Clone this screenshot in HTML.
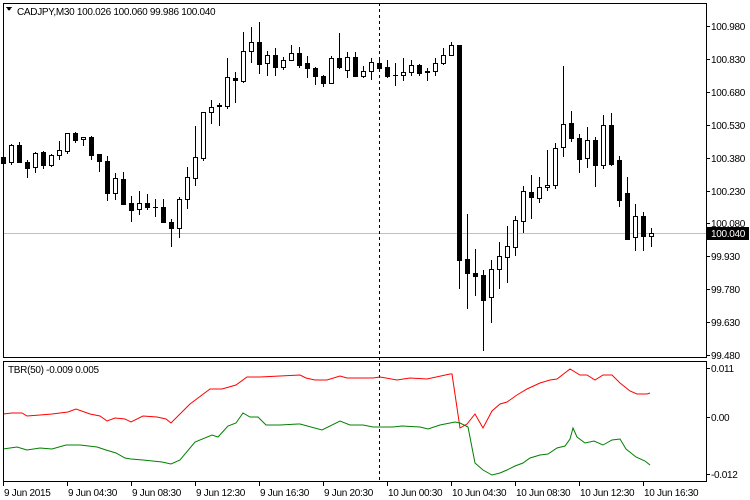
<!DOCTYPE html>
<html><head><meta charset="utf-8"><style>
html,body{margin:0;padding:0;background:#fff;width:750px;height:500px;overflow:hidden}
svg text{font-family:"Liberation Sans",sans-serif;font-size:10px;fill:#000;letter-spacing:-0.3px}
</style></head><body>
<svg id="s" width="750" height="500" xmlns="http://www.w3.org/2000/svg" shape-rendering="crispEdges">
<rect width="750" height="500" fill="#fff"/>
<line x1="3" y1="233.5" x2="707" y2="233.5" stroke="#c0c0c0"/>
<line x1="379.5" y1="3" x2="379.5" y2="482" stroke="#000" stroke-dasharray="3,3"/>
<g id="c"></g>
<polyline fill="none" stroke="#f00" stroke-width="1" shape-rendering="auto" points="3,414 12,413 22,413 27,416 40,415 52,414 68,412 76,409 90,414 100,416 107,421 115,418 125,419 131,422 143,416 157,417 166,419 171,423 190,404 210,389 222,389 236,385 247,377 260,377 280,376 300,375 306,378 315,380 327,380 340,376 347,378 373,378 380,377 397,380 410,378 427,379 450,374 452,374 460,428 467,424 475,414 483,428 492,411 500,404 507,402 517,395 527,389 540,383 550,380 557,379 570,369 580,375 587,375 595,380 603,375 612,375 620,383 630,391 637,394 647,394 650,393"/>
<polyline fill="none" stroke="#008000" stroke-width="1" shape-rendering="auto" points="3,449 17,447 27,450 40,448 52,449 66,445 80,445 97,447 106,450 116,453 125,458 131,459 143,460 162,462 171,464 180,460 195,442 212,435 218,437 228,426 236,423 243,413 250,417 258,417 266,425 280,425 298,424 300,424 322,430 340,421 350,425 363,425 373,427 380,427 393,427 402,426 420,427 428,429 440,425 455,422 460,423 468,427 475,463 483,470 492,475 500,473 507,470 515,466 523,463 530,458 540,455 548,454 557,448 565,446 570,439 573,428 577,437 585,443 594,441 603,445 612,440 620,439 626,449 636,457 645,461 650,465"/>
<rect x="3.5" y="3.5" width="703" height="354" fill="none" stroke="#000"/>
<rect x="3.5" y="361.5" width="703" height="120" fill="none" stroke="#000"/>
<polygon points="6,7 12,7 9,11" fill="#000"/>
<text x="17" y="15">CADJPY,M30  100.026 100.060 99.986 100.040</text>
<text x="8" y="373">TBR(50) -0.009 0.005</text>
<g id="ax"></g>
<rect x="707" y="227" width="42" height="13" fill="#000"/>
<text x="711" y="237" style="fill:#fff">100.040</text>
</svg>
<script>
var d=[[157,163,155,165,0],[145,162,144,164,1],[145,162,142,162,0],[162,168,160,177,0],[153,167,152,172,1],[152,165,151,168,0],[155,165,154,166,1],[150,155,141,159,1],[133,151,133,153,1],[133,140,132,142,0],[137,139,137,145,1],[137,155,136,159,0],[154,161,154,171,0],[161,193,156,200,0],[178,193,173,199,1],[179,204,172,204,0],[203,210,196,221,0],[203,209,191,214,1],[203,207,194,209,0],[207,207,199,216,0],[207,222,199,222,0],[222,228,219,246,0],[199,228,197,237,1],[177,199,167,208,1],[157,178,126,185,1],[112,158,112,160,1],[107,112,100,123,1],[105,106,103,125,0],[77,106,58,108,1],[78,80,72,102,0],[51,81,32,82,1],[42,51,27,62,1],[42,64,22,73,0],[55,63,51,75,1],[55,67,48,75,0],[60,67,57,69,1],[53,60,45,60,1],[53,65,47,67,0],[63,68,56,77,0],[68,76,67,84,0],[76,83,75,86,0],[58,83,56,83,1],[58,67,33,68,0],[57,70,52,77,1],[57,76,52,76,0],[71,76,66,77,1],[62,71,58,79,1],[63,68,60,70,0],[67,76,60,77,0],[75,75,63,85,0],[72,75,58,80,1],[65,72,60,75,1],[65,73,64,75,0],[71,72,68,80,0],[63,71,58,75,1],[55,63,48,64,1],[45,55,42,55,1],[45,260,45,288,0],[259,273,214,308,0],[273,276,249,295,0],[275,300,270,350,0],[269,297,260,322,1],[256,269,242,288,1],[246,257,226,282,1],[220,247,216,255,1],[191,221,186,232,1],[192,197,175,218,0],[187,198,177,202,1],[185,187,150,190,1],[148,185,143,188,1],[124,147,66,156,1],[123,138,111,141,0],[138,159,134,172,0],[140,158,127,167,1],[140,165,137,186,0],[125,165,115,168,1],[125,164,113,165,0],[160,200,156,206,0],[193,239,177,239,0],[216,237,204,250,1],[216,236,212,250,0],[233,236,228,246,1]];
var h='';
d.forEach(function(c,k){var x=3+8*k,t=c[0],b=c[1];
h+='<line x1="'+(x+0.5)+'" y1="'+c[2]+'" x2="'+(x+0.5)+'" y2="'+(c[3]+1)+'" stroke="#000"/>';
if(b-t<1){h+='<rect x="'+(x-2)+'" y="'+t+'" width="5" height="1" fill="#000"/>';}
else if(c[4]){h+='<rect x="'+(x-1.5)+'" y="'+(t+0.5)+'" width="4" height="'+(b-t)+'" fill="#fff" stroke="#000"/>';}
else{h+='<rect x="'+(x-2)+'" y="'+t+'" width="5" height="'+(b-t+1)+'" fill="#000"/>';}
});
document.getElementById('c').innerHTML=h;
var a='',p=['100.980','100.830','100.680','100.530','100.380','100.230','100.080','99.930','99.780','99.630','99.480'];
p.forEach(function(s,i){var y=Math.round(26+i*32.9);a+='<line x1="707" y1="'+(y+0.5)+'" x2="710" y2="'+(y+0.5)+'" stroke="#000"/><text x="711" y="'+(y+4)+'">'+s+'</text>';});
[['0.011',368],['0.00',417],['-0.012',474]].forEach(function(v){a+='<line x1="707" y1="'+(v[1]+0.5)+'" x2="710" y2="'+(v[1]+0.5)+'" stroke="#000"/><text x="711" y="'+(v[1]+4)+'">'+v[0]+'</text>';});
var tl=['9 Jun 2015','9 Jun 04:30','9 Jun 08:30','9 Jun 12:30','9 Jun 16:30','9 Jun 20:30','10 Jun 00:30','10 Jun 04:30','10 Jun 08:30','10 Jun 12:30','10 Jun 16:30'];
tl.forEach(function(s,i){var x=3+64*i;a+='<line x1="'+(x+0.5)+'" y1="482" x2="'+(x+0.5)+'" y2="486" stroke="#000"/><text x="'+(x+1)+'" y="496">'+s+'</text>';});
document.getElementById('ax').innerHTML=a;
</script>
</body></html>
